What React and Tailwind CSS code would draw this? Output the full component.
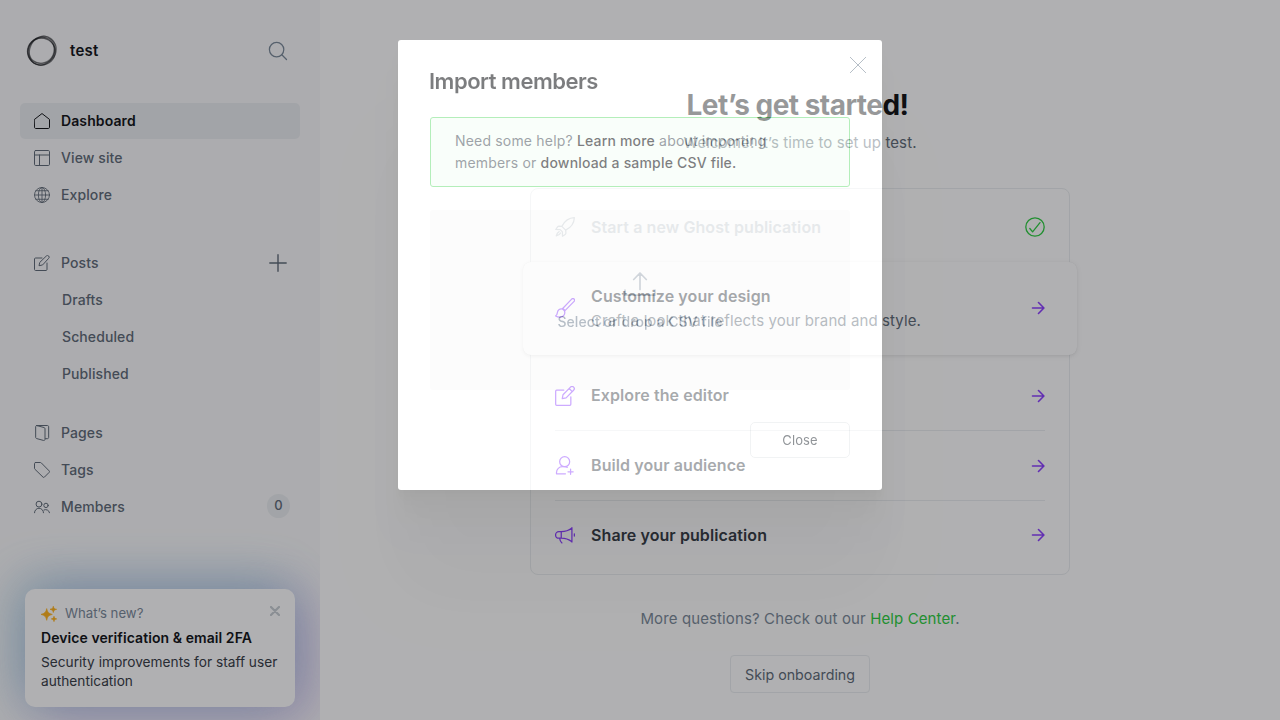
import React from 'react';

function Svg({ children, className = '', box = '0 0 24 24', stroke = 1.5 }) {
  return (
    <svg
      viewBox={box}
      fill="none"
      stroke="currentColor"
      strokeWidth={stroke}
      strokeLinecap="round"
      strokeLinejoin="round"
      className={`shrink-0 ${className}`}
    >
      {children}
    </svg>
  );
}

const Home = () => (
  <Svg className="h-4 w-4 text-[#15171a]">
    <path d="M.75 9.6 12 .8l11.25 8.8v11.9c0 1-.7 1.75-1.7 1.75H2.45c-1 0-1.7-.75-1.7-1.75z" />
  </Svg>
);
const Layout = () => (
  <Svg className="h-4 w-4">
    <rect x=".75" y=".75" width="22.5" height="22.5" rx="1.8" />
    <path d="M.75 7.5h22.5M8.25 7.5v15.75" />
  </Svg>
);
const Globe = () => (
  <Svg className="h-4 w-4" stroke={1.3}>
    <circle cx="12" cy="12" r="11.25" />
    <ellipse cx="12" cy="12" rx="5.4" ry="11.25" />
    <path d="M.75 12h22.5M2.8 5.6h18.4M2.8 18.4h18.4M12 .75v22.5" />
  </Svg>
);
const Write = () => (
  <Svg className="h-4 w-4">
    <path d="M19.5 12v9.75c0 .83-.67 1.5-1.5 1.5H2.25c-.83 0-1.5-.67-1.5-1.5V6c0-.83.67-1.5 1.5-1.5H12" />
    <path d="m12.4 15-4.9 1.1L8.6 11.2 18.5 1.5a2.4 2.4 0 0 1 3.5 0 2.4 2.4 0 0 1 0 3.6z" />
  </Svg>
);
const Pages = () => (
  <Svg className="h-4 w-4">
    <path d="M4 .75h16.2c1 0 1.8.8 1.8 1.8v16.2c0 1-.8 1.8-1.8 1.8h-3" />
    <path d="M4.3.9 15.1 3.8c.8.2 1.4.9 1.4 1.7v16c0 1.2-1 2-2.1 1.7L3.8 20.3c-.8-.2-1.3-.9-1.3-1.7V2.4c0-1.2.8-1.8 1.8-1.5z" />
  </Svg>
);
const Tag = () => (
  <Svg className="h-4 w-4">
    <path d="M2.25.75h7.4c.5 0 .9.2 1.2.5l12 12.2c.5.5.5 1.4 0 2l-7.3 7.3c-.6.5-1.5.5-2 0l-12.3-12c-.3-.4-.5-.8-.5-1.2v-7.3c0-.8.7-1.5 1.5-1.5z" />
  </Svg>
);
const Members = () => (
  <Svg className="h-4 w-4">
    <circle cx="7.5" cy="7.7" r="4.4" />
    <circle cx="18" cy="9.6" r="3.3" />
    <path d="M.75 20.6a6.75 6.75 0 0 1 13.5 0M15 16.4a5.6 5.6 0 0 1 8.25 4.2" />
  </Svg>
);

function NavItem({ icon, label, active, children }) {
  return (
    <div
      className={`flex h-9 items-center rounded-[5px] pl-3.5 pr-2.5 text-[14px] tracking-[0.1px] ${
        active ? 'bg-[#ebeef0] font-semibold text-[#15171a]' : 'font-medium text-[#626d79]'
      }`}
    >
      <span className="mr-[11px] flex w-4">{icon}</span>
      <span className="flex-1 pb-px">{label}</span>
      {children}
    </div>
  );
}

function Logo() {
  return (
    <svg viewBox="0 0 32 32" className="-mt-px h-8 w-8" fill="none" stroke="#15171a">
      <ellipse cx="15.4" cy="16.6" rx="13.9" ry="13.5" strokeWidth="1.3" opacity=".6" />
      <ellipse cx="15.2" cy="16.4" rx="13.1" ry="14.1" strokeWidth="1" opacity=".5" transform="rotate(20 16 16)" />
      <ellipse cx="17.1" cy="15.3" rx="14.2" ry="12.4" strokeWidth="1.3" opacity=".4" transform="rotate(-50 16 16)" />
      <ellipse cx="16.2" cy="15.7" rx="14.8" ry="12" strokeWidth="1.2" opacity=".4" transform="rotate(-68 16 16)" />
      <ellipse cx="15.6" cy="15.5" rx="12.7" ry="14.4" strokeWidth="1.2" opacity=".4" transform="rotate(65 16 16)" />
    </svg>
  );
}

function WhatsNew() {
  return (
    <div className="mx-[25px] mb-[13px] h-[118px] rounded-[10px] bg-white px-4 pt-[15px] shadow-[-10px_-8px_50px_rgba(105,200,190,0.26),0_-4px_50px_rgba(90,140,225,0.32),14px_10px_50px_rgba(180,105,225,0.30)]">
      <div className="flex h-[19px] items-center text-[13.2px] text-[#7c8b9a]">
        <svg viewBox="0 0 16 16" className="mr-2 mt-px h-4 w-4" fill="#ffb41f" stroke="#ffb41f" strokeWidth=".7" strokeLinejoin="round">
          <path d="M5.7 2.6c.7 3.7 1.8 4.9 5.6 5.8-3.8.9-4.9 2.1-5.6 5.9C5 10.5 3.8 9.3 0 8.4c3.8-.9 5-2.1 5.7-5.8zM12.3.3c.4 2.1 1.2 2.6 3.3 3-2.1.5-2.9 1.1-3.3 3.2-.4-2.1-1.2-2.7-3.3-3.2 2.1-.4 2.9-.9 3.3-3zM13 10.3c.3 1.600.9 2.200 2.700 2.600-1.800.4-2.400 1-2.700 2.700-.4-1.700-1-2.300-2.700-2.700 1.700-.4 2.300-1 2.700-2.600z" />
        </svg>
        <span className="flex-1">What’s new?</span>
        <Svg className="-mr-px mb-[5px] h-[10px] w-[10px] text-[#c8ced3]" box="0 0 10 10" stroke={2.2}>
          <path d="m1 1 8 8m0-8L1 9" />
        </Svg>
      </div>
      <div className="mt-[5px] text-[14px] font-semibold leading-5 tracking-[0.07px] text-[#15171a]">Device verification &amp; email 2FA</div>
      <div className="mt-[5px] whitespace-nowrap text-[13.7px] leading-[19px] text-[#394047]">
        Security improvements for staff user
        <br />
        authentication
      </div>
    </div>
  );
}

function Sidebar() {
  return (
    <aside className="flex h-full w-80 shrink-0 flex-col overflow-hidden bg-[#fafafb]">
      <div className="flex h-[103px] items-center pl-[26px] pr-[32px]">
        <Logo />
        <span className="ml-3 flex-1 text-[15px] font-semibold tracking-[0.25px] text-[#15171a]">test</span>
        <Svg className="-mt-px h-5 w-5 text-[#7c8b9a]" box="0 0 20 20" stroke={1.25}>
          <circle cx="8.6" cy="8.600" r="7.200" />
          <path d="m13.800 13.800 4.700 4.700" />
        </Svg>
      </div>
      <nav className="px-5">
        <div className="flex flex-col gap-px">
          <NavItem icon={<Home />} label="Dashboard" active />
          <NavItem icon={<Layout />} label="View site" />
          <NavItem icon={<Globe />} label="Explore" />
        </div>
        <div className="mt-8 flex flex-col gap-px">
          <NavItem icon={<Write />} label="Posts">
            <Svg className="mr-[3px] h-[18px] w-[18px]" box="0 0 18 18" stroke={1.4}>
              <path d="M9 .8v16.4M.8 9h16.4" />
            </Svg>
          </NavItem>
          {['Drafts', 'Scheduled', 'Published'].map((t) => (
            <div key={t} className="flex h-9 items-center pb-px pl-[42px] text-[14px] font-medium tracking-[0.1px] text-[#626d79]">
              {t}
            </div>
          ))}
        </div>
        <div className="mt-[23px] flex flex-col gap-px">
          <NavItem icon={<Pages />} label="Pages" />
          <NavItem icon={<Tag />} label="Tags" />
          <NavItem icon={<Members />} label="Members">
            <span className="-mt-0.5 flex h-6 w-[23px] items-center justify-center rounded-full bg-[#ebeef0] text-[13px]">0</span>
          </NavItem>
        </div>
      </nav>
      <div className="mt-auto">
        <WhatsNew />
      </div>
    </aside>
  );
}

const Rocket = () => (
  <Svg className="h-5 w-5 text-[#ced4d9]">
    <path d="M8.2 11.2C11.5 5 16 1 23.2.8 23 8 19 12.5 12.8 15.8zM8.2 11.2l-3.4-.3c-.7 0-1.3.3-1.7.9L.9 15l5.3.1M12.8 15.8l.3 3.4c0 .7-.3 1.3-.9 1.7L9 23.1l-.1-5.3M5 17.5c-1.900.9-3 3-3.500 5.200 2.200-.5 4.300-1.600 5.200-3.500M6.200 15.100l2.700 2.700" />
  </Svg>
);
const Brush = () => (
  <Svg className="h-5 w-5">
    <path d="M9.2 12.6 20 1.3a1.9 1.9 0 0 1 2.9 2.8L12 15.2M9.2 12.6c1.4.4 2.3 1.3 2.8 2.6M9.2 13.3a4.3 4.3 0 0 1 2.2 2.3c1.4 4.1-1.7 7.2-5.6 7.2-2 0-3.800-.5-5-1.300 1.700-.7 1.800-2.200 2-3.800.4-3.300 3.200-5.400 6.400-4.400" />
  </Svg>
);
const Compose = () => (
  <Svg className="h-5 w-5">
    <path d="M19 13v9c0 .7-.5 1.2-1.2 1.2H2C1.3 23.2.8 22.7.8 22V6.2C.8 5.5 1.3 5 2 5h8.5" />
    <path d="m13.3 14.2-4.6 1 .9-4.7 9-9.1a2.4 2.4 0 0 1 3.7 3.7zM17 3l3.7 3.7" />
  </Svg>
);
const UserPlus = () => (
  <Svg className="h-5 w-5">
    <circle cx="11.6" cy="6.8" r="6" />
    <path d="M12.5 21.3H1.8v-1.5c0-4 3.2-7 7.2-7h2.5c1.2 0 2.3.3 3.3.8M18.7 15.8v6.2M15.6 18.9h6.2" />
  </Svg>
);
const Megaphone = () => (
  <Svg className="h-5 w-5">
    <path d="M20.3 3v17.5M20.3 3.6C16.5 6.6 12 8 7.5 8H4.6a3.8 3.8 0 0 0 0 7.8h2.9c4.5 0 9 1.4 12.8 4.2M7.5 8v7.8M5.5 15.8c.3 2.3 1.3 4.4 2.8 5.7M23.2 10.5v2.8" />
  </Svg>
);
const Arrow = () => (
  <Svg className="h-[14px] w-[14px] text-[#8e42ff]" box="0 0 14 14" stroke={1.6}>
    <path d="M1.5 7h11.2M7.5 1.5 12.9 7l-5.4 5.5" />
  </Svg>
);

function Step({ icon, title, className = '', titleClass = '' }) {
  return (
    <div className={`mx-6 flex items-center text-[#8e42ff] ${className}`}>
      {icon}
      <span className={`ml-4 flex-1 text-[16px] font-semibold tracking-[0.09px] text-[#394047] ${titleClass}`}>{title}</span>
      <Arrow />
    </div>
  );
}

function Onboarding() {
  return (
    <main className="flex flex-1 flex-col items-center bg-white">
      <h1 className="mr-[5px] mt-[85px] text-[28px] font-bold leading-10 tracking-[-0.52px] text-[#15171a]">Let’s get started!</h1>
      <p className="mt-[6px] text-[15px] leading-6 tracking-[0.1px] text-[#626d79]">Welcome! It’s time to set up test.</p>
      <section className="mt-[33px] h-[387px] w-[540px] rounded-lg border border-[#ebeef0]">
        <div className="mx-6 flex h-[73px] items-center pt-[3px]">
          <Rocket />
          <span className="ml-4 flex-1 text-[16px] font-semibold tracking-[0.09px] text-[#ced4d9]">Start a new Ghost publication</span>
          <Svg className="h-5 w-5 text-[#30cf43]" box="0 0 20 20" stroke={1.3}>
            <circle cx="10" cy="10" r="9.2" />
            <path d="m4.8 11.5 2.8 3.4L15 5.6" />
          </Svg>
        </div>
        <div className="-mx-2 flex h-[93px] items-center rounded-lg bg-white px-8 pb-px text-[#8e42ff] shadow-[0_0_1px_rgba(0,0,0,0.1),0_1px_6px_rgba(0,0,0,0.05),0_2px_4px_-1px_rgba(0,0,0,0.06)]">
          <Brush />
          <div className="ml-4 flex-1">
            <div className="text-[16px] font-semibold leading-6 tracking-[0.09px] text-[#394047]">Customize your design</div>
            <div className="mt-px text-[15px] leading-6 tracking-[0.1px] text-[#626d79]">Craft a look that reflects your brand and style.</div>
          </div>
          <Arrow />
        </div>
        <Step className="h-[76px] border-b border-[#ebeef0] pt-[6px]" titleClass="pb-0.5" icon={<Compose />} title="Explore the editor" />
        <Step className="h-[70px] border-b border-[#ebeef0]" titleClass="pb-0.5" icon={<UserPlus />} title="Build your audience" />
        <Step className="h-[68px]" icon={<Megaphone />} title="Share your publication" />
      </section>
      <p className="mt-8 text-[15px] leading-6 tracking-[0.12px] text-[#7c8b9a]">
        More questions? Check out our <span className="text-[#30cf43]">Help Center</span>.
      </p>
      <button className="mt-6 h-[38px] w-[140px] rounded border border-[#ebeef0] pt-0.5 text-[14.25px] text-[#626d79]">Skip onboarding</button>
    </main>
  );
}

function ImportModal() {
  return (
    <div className="absolute left-[398px] top-10 flex h-[450px] w-[484px] flex-col rounded-[3px] bg-white px-8 opacity-[0.56] shadow-[0_2.8px_2.2px_rgba(0,0,0,0.02),0_6.7px_5.3px_rgba(0,0,0,0.028),0_12.5px_10px_rgba(0,0,0,0.035),0_22.3px_17.9px_rgba(0,0,0,0.042),0_41.8px_33.4px_rgba(0,0,0,0.05),0_100px_80px_rgba(0,0,0,0.07),0_0_0_2000px_rgba(5,5,10,0.564)]">
      <div className="flex h-[77px] items-start">
        <h2 className="-ml-px mt-[25px] flex-1 text-[22px] font-semibold leading-8 tracking-[-0.48px] text-[#15171a]">Import members</h2>
        <Svg className="-mr-4 mt-[17px] h-4 w-4 text-[#7c8b9a]" box="0 0 16 16" stroke={1}>
          <path d="m.3.3 15.4 15.4m0-15.4L.3 15.7" />
        </Svg>
      </div>
      <div className="h-[70px] rounded-[3px] border border-[#79e084] bg-[#f5fef6] px-6 pt-3 text-[14px] leading-[22px] tracking-[0.18px] text-[#515a64]">
        Need some help? <span className="font-medium text-[#15171a]">Learn more</span> about importing
        <br />
        members or <span className="font-medium text-[#15171a]">download a sample CSV file.</span>
      </div>
      <div className="mt-[23px] flex h-[180px] flex-col items-center rounded-[3px] bg-[#fafafa] pt-[62px] text-[14px] font-medium text-[#7c8b9a]">
        <Svg className="h-6 w-8 text-[#abb4be]" box="0 0 32 24" stroke={1.7}>
          <path d="M16 17.5V1.5M9.7 7.5 16 1l6.3 6.5M1 18v5.2h30V18" />
        </Svg>
        <span className="mt-4 leading-5 tracking-[0.08px]">Select or drop a CSV file</span>
      </div>
      <div className="mt-8 flex justify-end">
        <button className="h-9 w-[100px] rounded-[5px] border border-[#e6e9eb] pt-0.5 text-[13px] tracking-[0.1px] text-[#394047]">Close</button>
      </div>
    </div>
  );
}

export default function App() {
  return (
    <div className="relative flex h-[720px] w-[1280px] overflow-hidden font-['Inter',sans-serif]">
      <Sidebar />
      <Onboarding />
      <ImportModal />
    </div>
  );
}
